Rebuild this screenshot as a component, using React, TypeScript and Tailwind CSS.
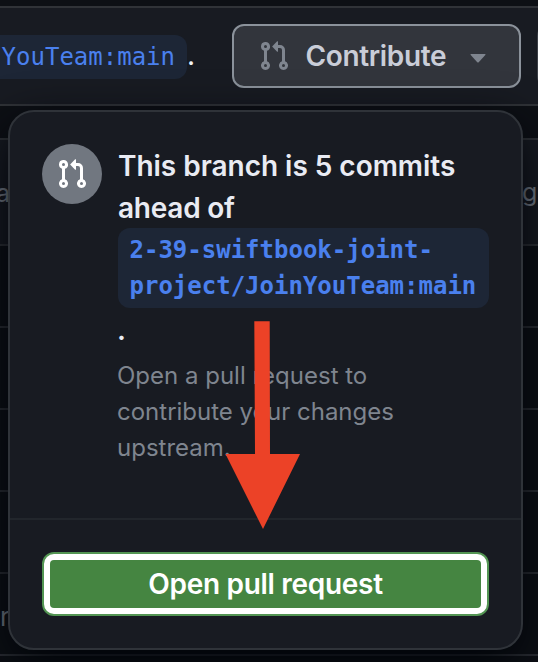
import type { ReactNode } from "react";

function PullRequestIcon({ className }: { className: string }) {
  return (
    <svg viewBox="0 0 16 16" width="32" height="32" fill="currentColor" className={className}>
      <path d="M1.5 3.25a2.25 2.25 0 1 1 3 2.122v5.256a2.251 2.251 0 1 1-1.5 0V5.372A2.25 2.25 0 0 1 1.5 3.25Zm5.677-.177L9.573.677A.25.25 0 0 1 10 .854V2.5h1A2.5 2.5 0 0 1 13.5 5v5.628a2.251 2.251 0 1 1-1.5 0V5a1 1 0 0 0-1-1h-1v1.646a.25.25 0 0 1-.427.177L7.177 3.427a.25.25 0 0 1 0-.354ZM3.75 2.5a.75.75 0 1 0 0 1.5.75.75 0 0 0 0-1.5Zm0 9.5a.75.75 0 1 0 0 1.5.75.75 0 0 0 0-1.5Zm8.25.75a.75.75 0 1 0 1.5 0 .75.75 0 0 0-1.5 0Z" />
    </svg>
  );
}

function FileRow({ children }: { children?: ReactNode }) {
  return (
    <div className="flex h-[82px] items-center justify-between border-b-2 border-[#2c2f35] text-[26px] text-[#7d8590]">
      {children}
    </div>
  );
}

function ContributeMenu() {
  return (
    <section className="absolute left-2 top-[110px] flex h-[540px] w-[515px] flex-col rounded-[26px] border-2 border-[#2f3339] bg-[#181b22] shadow-[0_16px_48px_#010409]">
      <div className="flex h-[406px] gap-4 pl-8 pt-8">
        <div className="flex size-[60px] shrink-0 items-center justify-center rounded-full bg-[#717780] text-white">
          <PullRequestIcon className="" />
        </div>
        <div className="w-[372px]">
          <h2 className="text-[28px] font-semibold leading-[42px] text-[#e9ebf3]">
            <span className="block h-[42px] whitespace-nowrap pt-px tracking-[-0.03px]">This branch is 5 commits</span>
            <span className="block h-[42px] whitespace-nowrap pt-px tracking-[-0.25px]">ahead of</span>
            <code className="block h-20 w-[371px] rounded-xl bg-[#1d2636] pl-[11.5px] py-1 font-['DejaVu_Sans_Mono',monospace] text-[24px] font-bold leading-9 text-[#4a80ee]">
              2-39-swiftbook-joint-
              <br />
              project/JoinYouTeam:main
            </code>
            <span className="-ml-px block pt-px">.</span>
          </h2>
          <p className="-ml-px mt-[7px] whitespace-nowrap text-[24px] leading-9 text-[#7f858f]">
            Open a pull request to
            <br />
            contribute your changes
            <br />
            upstream.
          </p>
        </div>
      </div>
      <div className="border-t-2 border-[#22262c] px-8 pt-8">
        <button className="flex h-16 w-[447px] rounded-xl border-2 border-[#539553] bg-white p-1.5">
          <span className="flex h-full w-full items-center justify-center rounded-[4px] bg-[#458541] text-[28px] font-semibold tracking-[-0.3px] text-white">
            Open pull request
          </span>
        </button>
      </div>
    </section>
  );
}

export default function App() {
  return (
    <main className="relative h-[662px] w-[538px] overflow-hidden bg-[#0d1015] font-[Inter,sans-serif]">
      <div className="h-1.5" />
      <header className="flex h-[100px] items-start border-y-2 border-[#303338] bg-[#181b22] pt-4">
        <div className="flex w-[232px] shrink-0 items-center pt-[11px] text-[28px] text-[#f0f2f8]">
          <code className="h-11 w-[187px] shrink-0 rounded-r-xl bg-[#1d2636] pl-[1.6px] font-['DejaVu_Sans_Mono',monospace] text-[24px] leading-[44px] text-[#4a80ee]">
            YouTeam:main
          </code>
          <span className="-mt-1 leading-[43px]">.</span>
        </div>
        <button className="flex h-16 w-[289px] shrink-0 items-center rounded-xl border-2 border-[#8b929b] bg-[#32353c] pl-6 text-[#c9cdd8]">
          <PullRequestIcon className="shrink-0 text-[#7f858f]" />
          <span className="ml-[15.5px] w-[150px] shrink-0 whitespace-nowrap text-left text-[28px] font-semibold tracking-[-0.35px]">
            Contribute
          </span>
          <svg viewBox="0 0 16 9" width="16" height="9" className="ml-[14.5px] mt-1 shrink-0 text-[#7f858f]">
            <path d="M1 0H15Q16 0 15.3 .9L8.7 8.2Q8 8.9 7.3 8.2L.7 .9Q0 0 1 0Z" fill="currentColor" />
          </svg>
        </button>
        <div className="ml-4 h-16 w-24 shrink-0 rounded-xl border-2 border-[#3b3f46] bg-[#25282f]" />
      </header>
      <div className="mt-8 flex h-[108px] items-center justify-between border-y-2 border-[#2f3237] bg-[#181b22] text-[25px] text-[#7d8590]">
        <span className="-ml-1 pt-1">a</span>
        <span className="-mr-[14px] pt-0.5">ge</span>
      </div>
      <FileRow />
      <FileRow />
      <FileRow />
      <FileRow />
      <FileRow>
        <span className="pt-1">r</span>
      </FileRow>
      <ContributeMenu />
      <svg viewBox="225 320 76 210" width="76" height="210" className="absolute left-[225px] top-80">
        <path d="M254.3 321.3H269.7L270 454H300L263 529L225.5 454H255Z" fill="#ec4227" />
      </svg>
    </main>
  );
}
